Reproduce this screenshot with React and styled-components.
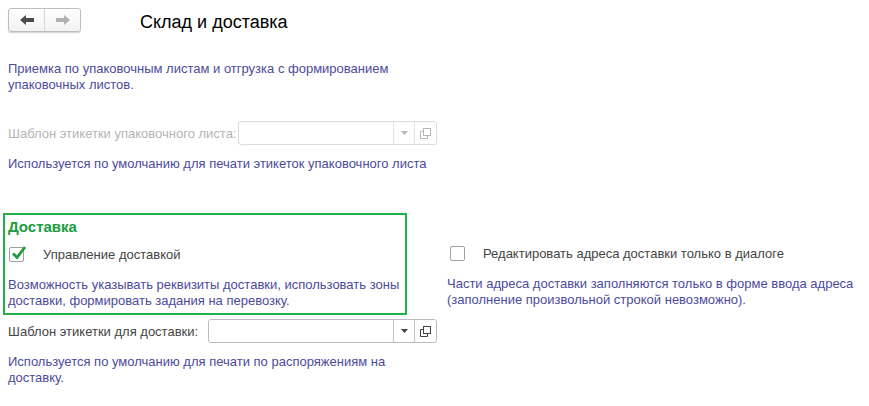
import React from "react";
import styled, { createGlobalStyle } from "styled-components";

const Global = createGlobalStyle`
  body {
    margin: 0;
    background: #fff;
    font-family: "Liberation Sans", Arial, sans-serif;
    font-size: 13px;
    color: #333;
  }
`;

const Page = styled.div`
  width: 869px;
  height: 406px;
  overflow: hidden;
  padding: 8px 0 0 8px;
  box-sizing: border-box;
`;

const Header = styled.div`
  display: flex;
  align-items: center;
  height: 24px;
`;

const NavGroup = styled.div`
  display: flex;
  width: 73px;
  height: 24px;
  box-sizing: border-box;
  border: 1px solid #bdbdbd;
  border-radius: 3px;
  background: linear-gradient(#ffffff, #f2f2f2);
  box-shadow: 0 1px 1px rgba(0, 0, 0, 0.18);
`;

const NavButton = styled.div`
  flex: 1;
  display: flex;
  align-items: center;
  justify-content: center;
  & + & {
    border-left: 1px solid #d6d6d6;
  }
`;

const Title = styled.div`
  margin-left: 59px;
  font-size: 18px;
  color: #000;
  line-height: 24px;
  margin-top: 4px;
`;

const Note = styled.div`
  color: #4b4b9c;
  line-height: 16px;
  margin-top: ${(p) => p.$top || 0}px;
  white-space: nowrap;
`;

const FieldRow = styled.div`
  display: flex;
  align-items: center;
  margin-top: ${(p) => p.$top || 0}px;
  height: 24px;
`;

const Label = styled.div`
  color: ${(p) => (p.$disabled ? "#b4b4b4" : "#444")};
  width: ${(p) => p.$width}px;
`;

const Input = styled.div`
  display: flex;
  width: ${(p) => p.$width}px;
  height: 24px;
  box-sizing: border-box;
  border: 1px solid ${(p) => (p.$disabled ? "#dcdcdc" : "#bcbcbc")};
  border-radius: 3px;
  background: #fff;
`;

const InputText = styled.div`
  flex: 1;
`;

const InputButton = styled.div`
  width: ${(p) => p.$width}px;
  display: flex;
  align-items: center;
  justify-content: center;
  border-left: 1px solid ${(p) => (p.$disabled ? "#e2e2e2" : "#c4c4c4")};
  color: ${(p) => (p.$disabled ? "#b8b8b8" : "#444")};
`;

const Columns = styled.div`
  display: flex;
  margin-top: 41px;
  margin-left: -5px;
`;

const Group = styled.div`
  width: 404px;
  height: 102px;
  box-sizing: border-box;
  border: 2px solid #22b04b;
  padding: 3px 0 0 3px;
`;

const GroupTitle = styled.div`
  color: #1a9d3e;
  font-weight: bold;
  font-size: 15px;
  line-height: 17px;
`;

const CheckRow = styled.div`
  display: flex;
  align-items: center;
  height: 15px;
  margin-top: ${(p) => p.$top || 0}px;
`;

const Box = styled.div`
  width: 15px;
  height: 15px;
  box-sizing: border-box;
  border: 1px solid #a0a0a0;
  border-radius: 2px;
  background: #fff;
  margin-left: ${(p) => p.$left || 0}px;
  position: relative;
`;

const Check = styled.svg`
  position: absolute;
  left: 1px;
  top: -3px;
`;

const CheckLabel = styled.div`
  margin-left: ${(p) => p.$gap}px;
  color: #444;
`;

const RightCol = styled.div`
  padding-top: 33px;
  margin-left: 40px;
`;

function Arrow({ dir, color }) {
  return (
    <svg width="14" height="10" viewBox="0 0 14 10">
      <path
        d={dir === "left" ? "M0 5 L6 0 L6 3 L14 3 L14 7 L6 7 L6 10 Z" : "M14 5 L8 0 L8 3 L0 3 L0 7 L8 7 L8 10 Z"}
        fill={color}
      />
    </svg>
  );
}

function OpenIcon({ color }) {
  return (
    <svg width="11" height="11" viewBox="0 0 11 11">
      <rect x="3.5" y="0.5" width="7" height="7" fill="none" stroke={color} />
      <path d="M0.5 3.5 V10.5 H7.5" fill="none" stroke={color} />
      <path d="M0.5 3.5 H3.5 M7.5 7.5 V10.5" fill="none" stroke={color} />
    </svg>
  );
}

function Field({ label, labelWidth, width, disabled }) {
  return (
    <>
      <Label $disabled={disabled} $width={labelWidth}>{label}</Label>
      <Input $width={width} $disabled={disabled}>
        <InputText />
        <InputButton $width={20} $disabled={disabled}>
          <svg width="7" height="4" viewBox="0 0 7 4">
            <path d="M0 0 H7 L3.5 4 Z" fill="currentColor" />
          </svg>
        </InputButton>
        <InputButton $width={21} $disabled={disabled}>
          <OpenIcon color={disabled ? "#b8b8b8" : "#444"} />
        </InputButton>
      </Input>
    </>
  );
}

export default function App() {
  return (
    <Page>
      <Global />
      <Header>
        <NavGroup>
          <NavButton>
            <Arrow dir="left" color="#4a4a4a" />
          </NavButton>
          <NavButton>
            <Arrow dir="right" color="#b0b0b0" />
          </NavButton>
        </NavGroup>
        <Title>Склад и доставка</Title>
      </Header>

      <Note $top={29}>
        Приемка по упаковочным листам и отгрузка с формированием
        <br />
        упаковочных листов.
      </Note>

      <FieldRow $top={28}>
        <Field label="Шаблон этикетки упаковочного листа:" labelWidth={230} width={199} disabled />
      </FieldRow>

      <Note $top={11}>Используется по умолчанию для печати этикеток упаковочного листа</Note>

      <Columns>
        <Group>
          <GroupTitle>Доставка</GroupTitle>
          <CheckRow $top={12}>
            <Box $left={1}>
              <Check width="16" height="16" viewBox="0 0 16 16">
                <path d="M2 8.5 L6 12.5 L14 2" fill="none" stroke="#1f9a3c" strokeWidth="2.8" />
              </Check>
            </Box>
            <CheckLabel $gap={19}>Управление доставкой</CheckLabel>
          </CheckRow>
          <Note $top={15}>
            Возможность указывать реквизиты доставки, использовать зоны
            <br />
            доставки, формировать задания на перевозку.
          </Note>
        </Group>
        <RightCol>
          <CheckRow>
            <Box $left={3} />
            <CheckLabel $gap={18}>Редактировать адреса доставки только в диалоге</CheckLabel>
          </CheckRow>
          <Note $top={15}>
            Части адреса доставки заполняются только в форме ввода адреса
            <br />
            (заполнение произвольной строкой невозможно).
          </Note>
        </RightCol>
      </Columns>

      <FieldRow $top={4}>
        <Field label="Шаблон этикетки для доставки:" labelWidth={200} width={229} />
      </FieldRow>

      <Note $top={11}>
        Используется по умолчанию для печати по распоряжениям на
        <br />
        доставку.
      </Note>
    </Page>
  );
}
